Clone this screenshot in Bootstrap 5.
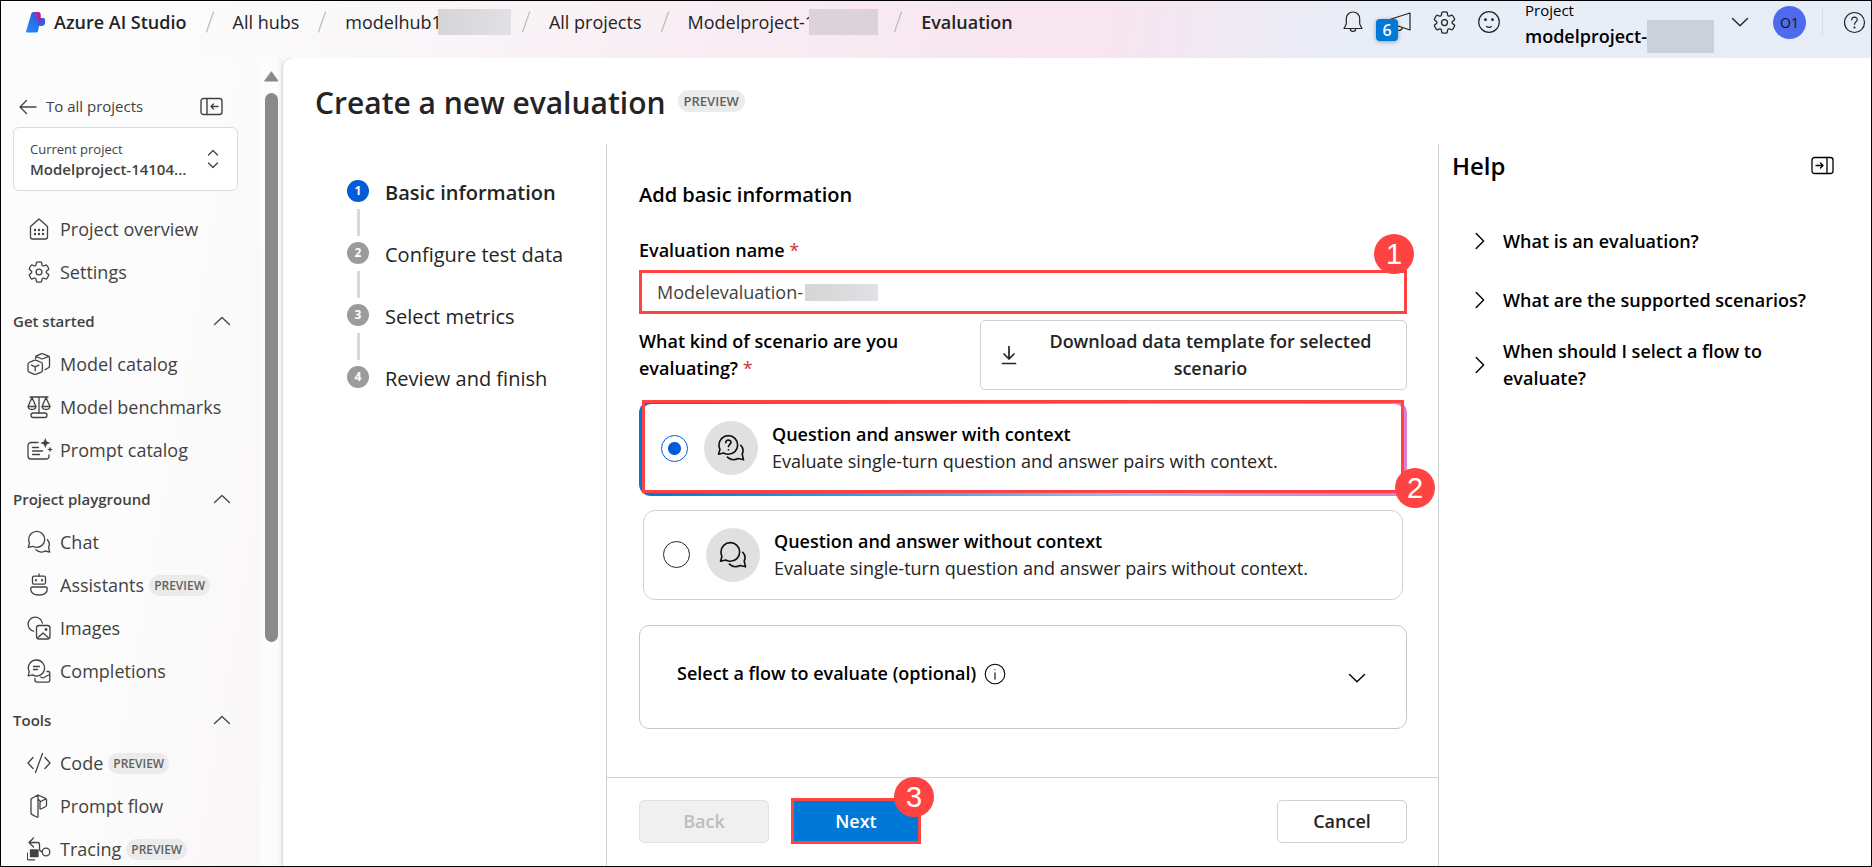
<!DOCTYPE html>
<html lang="en">
<head>
<meta charset="utf-8">
<meta name="viewport" content="width=device-width, initial-scale=1">
<title>Create a new evaluation - Azure AI Studio</title>
<link href="https://cdn.jsdelivr.net/npm/bootstrap@5.3.0/dist/css/bootstrap.min.css" rel="stylesheet">
<style>
:root{--ink:#242424;--ink-soft:#424242;--line:#d1d1d1;--blue:#0078d7;--radio:#015cda;--callout:#ff4343}
body{font-family:"Open Sans","Noto Sans",sans-serif;font-size:18px;line-height:27px;color:var(--ink);background:#fafafa}
svg{flex:none;fill:none;stroke:currentColor;stroke-linecap:round;stroke-linejoin:round}
button{color:inherit}
.semi{font-weight:600}
.frame{border:1px solid #000;background:linear-gradient(100deg,#fcfcfc 8%,#f9f5f8 22%,#f8e8f1 45%,#f7e5ef 55%,#e7eef8 68%,#e7edf7 100%)}

/* top bar */
.topbar{height:57px;padding-left:24px}
.crumbs{height:42px}
.crumbs a{color:var(--ink);text-decoration:none}
.crumbs .sep{width:8px;height:22px;margin:0 19px;stroke:#bdbdbd;stroke-width:1.2}
.crumbs .smudge{height:26px;position:relative}
.crumbs .smudge+.sep{margin-left:11px}
.smudge{background:linear-gradient(100deg,#d5d4d7,#dcdbde 60%,#e3e1e5);display:inline-block}
.smudge-hub{width:73px;margin-left:-4px}
.smudge-pink{width:69px;margin-left:-6px;background:#dcd2da}
.smudge-cool{width:67px;height:33px;background:#cad1da}
.tools{height:42px;padding-right:5px}
.iconbtn{border:0;background:none;padding:0;display:flex;position:relative}
.count{position:absolute;left:-12px;top:9px;width:22px;height:22px;line-height:22px;border-radius:4px;background:var(--blue);color:#fff;font-size:16px;font-weight:600;box-shadow:0 1px 4px rgba(0,0,0,.35)}
.avatar{width:33px;height:33px;border-radius:50%;background:#4f6bed;font-size:14px;line-height:33px;text-align:center;color:#111}
.vr-thin{width:1px;height:26px;background:#d5dbe4}
.proj{line-height:33px;width:206px;color:#000}
.proj small{font-size:15px;line-height:19px;display:block}

/* side navigation */
.side{width:259px;flex:none;padding:37px 22px 0 12px;color:var(--ink-soft);background:linear-gradient(100deg,#fcfcfc 50%,#f9f6f8)}
.side a,.side button{color:inherit;text-decoration:none}
.backrow{height:24px;font-size:15px;padding:0 15px 0 5px}
.picker{height:64px;margin-top:8px;padding:0 17px 0 16px;border:1px solid #dcdcdc;border-radius:6px;background:#fff;text-align:left;font-size:15px;line-height:20px}
.picker small{font-size:13px;display:block}
.navlist{margin:17px 0 0;padding:0;list-style:none}
.navitem{height:43px;padding-left:14px;gap:9px}
.navitem .pill{margin-left:-4px}
.navhead{height:43px;margin-top:6px;font-size:15px;border:0;background:none;padding:0 7px 0 0}
.pill{background:#ebebeb;color:#616161;border-radius:11px;font-size:12px;font-weight:600;line-height:21px;padding:0 5px}
.pill-lg{font-size:13px;line-height:22px;padding:0 6px}
.track{width:23px;flex:none;padding:13px 5px 0 4px;background:linear-gradient(90deg,#fcfcfc 75%,#ededed)}
.thumb{width:13px;height:549px;border-radius:7px;background:#8a8a8a;margin-top:11px}

/* main sheet */
.sheet{background:#fff;border-top-left-radius:10px;box-shadow:0 0 3px rgba(0,0,0,.2)}
.sheet-head{height:86px;padding:25px 0 0 32px;gap:12px}
.sheet-head h1{font-size:30px;line-height:40px;margin:0}
.sheet-head .pill{margin-top:7px}
.steps{width:323px;flex:none;padding:36px 0 0 64px;margin:0;list-style:none;font-size:20px;line-height:26px}
.steps li{height:62px;gap:16px;align-items:flex-start}
.stepmark{width:22px}
.stepmark b{display:block;width:22px;height:22px;border-radius:50%;background:#9b9b9b;color:#fff;font-size:12px;line-height:22px;text-align:center}
.stepmark .now{background:var(--radio)}
.stepmark i{width:3px;height:27px;background:#d8d8d8;margin-top:7px}
.formcol{border:1px solid var(--line);border-width:0 1px}
.formbody{padding:37px 31px 0 32px;color:#000}
.formbody h2{font-size:20px;line-height:28px;margin:0 0 28px}
.formbody label.caption{margin-bottom:6px}
.req{color:#d13438;font-weight:400}
.namebox{height:44px;border:3px solid var(--callout);border-radius:0;font-size:18px;padding:0 15px;color:var(--ink-soft);background:#fff}
.namebox:focus{border-color:var(--callout);box-shadow:none}
.namewrap .smudge{position:absolute;left:166px;top:14px;width:73px;height:17px}
.callout{position:absolute;width:40px;height:40px;border-radius:50%;background:var(--callout);color:#fff;font:29px/40px "Liberation Sans",sans-serif;text-align:center;z-index:2}
.c1{right:-7px;top:-36px}
.c2{right:-31px;bottom:-15px}
.c3{right:-16px;top:-24px}
.btn{--bs-btn-border-radius:5px;font-size:18px;line-height:27px}
.btn-line{border:1px solid var(--line);background:#fff;color:var(--ink)}
.kindrow{margin-top:6px}
.kind{max-width:300px}
.dl{width:427px;height:70px;padding:0 34px 0 20px;gap:32px}
.option{border-radius:12px;padding:0 19px;height:90px;border:1px solid var(--line);gap:16px;color:var(--ink)}
.option strong{display:block;font-weight:600;color:#000}
.option-on{height:95px;margin-top:11px;border:3px solid transparent;background:linear-gradient(#fff,#fff) padding-box,linear-gradient(90deg,#0078d4,#5ea9e6 45%,#a5b9e8 65%,#d982d3 90%) border-box}
.option-off{margin:14px 4px 0}
.redbox{position:absolute;inset:-4px 0 0 0;border:3px solid var(--callout);pointer-events:none}
.option .form-check-input{width:27px;height:27px;margin:0;border:1px solid #242424;flex:none;background-color:#fff}
.option .form-check-input:checked{border-color:var(--radio);background-image:radial-gradient(circle,var(--radio) 6px,transparent 7px)}
.disc{width:54px;height:54px;border-radius:50%;background:#e0e0e0;flex:none;color:#111}
.option>span:nth-child(3){margin-left:-2px}
.flowbox{height:104px;margin-top:25px;border:1px solid #c7c7c7;border-radius:10px;background:none;padding:0 40px 6px 37px}
.flowbox>svg{margin-top:9px}
.formfoot{height:89px;border-top:1px solid var(--line);padding:0 31px 2px 32px}
.formfoot .btn{width:130px;height:43px;padding:0}
.formfoot .btn-next{height:46px;margin-left:22px;border:3px solid var(--callout);border-radius:0;background:var(--blue);color:#fff}
.btn-off{border:1px solid #e0e0e0!important;background:#f0f0f0!important;color:#bdbdbd!important;opacity:1!important}
.help{width:432px;flex:none;padding:8px 37px 0 13px;color:#000}
.help h2{font-size:24px;line-height:28px;margin:0}
.helplist{padding:32px 40px 0 0}
.helpitem{min-height:59px;padding:8px 0 8px 23px;border:0;background:none;text-align:left;gap:18px}
</style>
</head>
<body>
<svg class="d-none" aria-hidden="true">
  <symbol id="gear" viewBox="0 0 20 20"><path d="M1.91 7.38A8.5 8.5 0 0 1 3.7 4.3a.5.5 0 0 1 .54-.13l1.92.68a1 1 0 0 0 1.32-.76l.36-2a.5.5 0 0 1 .4-.4 8.53 8.53 0 0 1 3.55 0c.2.04.35.2.38.4l.37 2a1 1 0 0 0 1.32.76l1.92-.68a.5.5 0 0 1 .54.13 8.5 8.5 0 0 1 1.78 3.08c.06.2 0 .4-.15.54l-1.56 1.32a1 1 0 0 0 0 1.52l1.56 1.32a.5.5 0 0 1 .15.54 8.5 8.5 0 0 1-1.78 3.08.5.5 0 0 1-.54.13l-1.92-.68a1 1 0 0 0-1.32.76l-.37 2a.5.5 0 0 1-.38.4 8.53 8.53 0 0 1-3.56 0 .5.5 0 0 1-.39-.4l-.36-2a1 1 0 0 0-1.32-.76l-1.92.68a.5.5 0 0 1-.54-.13 8.5 8.5 0 0 1-1.78-3.08.5.5 0 0 1 .15-.54l1.56-1.32a1 1 0 0 0 0-1.52L2.06 7.92a.5.5 0 0 1-.15-.54Z"/><circle cx="10" cy="10" r="2.4"/></symbol>
  <symbol id="up" viewBox="0 0 18 10"><path d="M1.5 8.5 9 1.5l7.5 7"/></symbol>
  <symbol id="down" viewBox="0 0 18 10"><path d="M1.5 1.5 9 8.8l7.5-7.3"/></symbol>
  <symbol id="right" viewBox="0 0 10 18"><path d="M1.2 1.5 8.6 9l-7.4 7.5"/></symbol>
  <symbol id="slash" viewBox="0 0 8 22"><path d="M7.5 1 .5 21"/></symbol>
  <symbol id="chat" viewBox="0 0 24 24"><path d="M9.7 1.4a8 8 0 0 1 8 8 8 8 0 0 1-8 8c-1.500 0-2.800-.4-4-1.100L1.300 17.300l1.200-4.100a8 8 0 0 1-.8-3.800 8 8 0 0 1 8-8Z"/><path d="M20.400 9.700a7 7 0 0 1 1.200 7.600l1.100 4.800-4.600-1.100a8 8 0 0 1-9.200-1.200"/></symbol>
  <symbol id="panel" viewBox="0 0 23 19"><rect x="1" y="1.500" width="21" height="16" rx="2.500"/><path d="M7 1.500v16M18 9.500h-7m2.500-2.500L11 9.500l2.500 2.500"/></symbol>
</svg>

<div class="frame vh-100 d-flex flex-column overflow-hidden">
  <header class="topbar d-flex justify-content-between">
    <nav aria-label="Breadcrumb">
      <div class="crumbs d-flex align-items-center text-nowrap">
        <svg width="21" height="22" viewBox="0 0 21 22" class="me-2" style="stroke:none">
          <defs><linearGradient id="lg" x1="0" y1="1" x2="1" y2="0"><stop offset="0" stop-color="#2a8cf5"/><stop offset="1" stop-color="#2352d8"/></linearGradient></defs>
          <path fill="url(#lg)" d="M8.500 1c-1 0-1.800.700-2.200 1.800L1 20.500q-.3 1 .8 1H10.500c1.500 0 2.500-.8 2.700-2.300L14 15h2.500c2 0 3.500-1.300 3.500-3V8.500q0-1.500-1.500-1.500h-3L12 1z"/>
          <path fill="#7b3fc4" d="M8 1h5v8h-1.500C10 7 9.500 3 8 1z"/><path fill="#c2188c" d="M12 1h1.500c1.500 0 2.200 1 2.200 2.500V13q-2.200-1-2.200-4z"/>
        </svg>
        <a href="#" class="semi">Azure AI Studio</a>
        <svg class="sep"><use href="#slash"/></svg><a href="#">All hubs</a>
        <svg class="sep"><use href="#slash"/></svg><a href="#">modelhub1</a><span class="smudge smudge-hub"></span>
        <svg class="sep"><use href="#slash"/></svg><a href="#">All projects</a>
        <svg class="sep"><use href="#slash"/></svg><a href="#">Modelproject-1</a><span class="smudge smudge-pink"></span>
        <svg class="sep ms-3"><use href="#slash"/></svg><a href="#" class="semi" aria-current="page">Evaluation</a>
      </div>
    </nav>
    <div class="tools d-flex align-items-center">
      <button class="iconbtn me-4" aria-label="Notifications"><svg width="22" height="24" viewBox="0 0 22 24" stroke-width="1.200"><path d="M11 2c-4 0-6.700 3-6.700 7v5L2 18.500h18L17.700 14V9c0-4-2.700-7-6.700-7ZM8.300 18.700c0 3.600 5.400 3.600 5.400 0"/></svg></button>
      <button class="iconbtn me-3" aria-label="Announcements"><svg width="24" height="24" viewBox="0 0 24 24" stroke-width="1.200"><path d="M22 3v17L2.500 13.500V9.300zM8 15.500v3.300c2.500 3 6 1.600 6.300-1.400"/></svg><span class="count">6</span></button>
      <button class="iconbtn me-3 ms-1" aria-label="Settings"><svg width="25" height="25" stroke-width="1"><use href="#gear"/></svg></button>
      <button class="iconbtn me-4 ms-1" aria-label="Feedback"><svg width="24" height="24" viewBox="0 0 24 24" stroke-width="1.200"><circle cx="12" cy="12" r="10.300"/><path d="M9.500 16.500c1.500 1 3.500 1 5 0"/><g fill="currentColor" stroke="none"><circle cx="8.500" cy="9.700" r="1.400"/><circle cx="15.500" cy="9.700" r="1.400"/></g></svg></button>
      <button class="iconbtn align-self-start">
        <span class="proj text-start"><small>Project</small><span class="semi d-flex">modelproject-<span class="smudge smudge-cool"></span></span></span>
      </button>
      <button class="iconbtn" aria-label="Choose project"><svg width="18" height="10" stroke-width="1.400"><use href="#down"/></svg></button>
      <span class="avatar ms-4">O1</span>
      <span class="vr-thin mx-3"></span>
      <button class="iconbtn ms-1" aria-label="Help"><svg width="23" height="23" viewBox="0 0 23 23" stroke-width="1.200"><circle cx="11.500" cy="11.500" r="10"/><path d="M8.700 9c0-4 5.800-3.500 5.600-.3-.1 2-2.800 2.200-2.800 4.600"/><circle cx="11.500" cy="16.500" r=".5"/></svg></button>
    </div>
  </header>

  <div class="d-flex flex-fill overflow-hidden">
    <aside class="side overflow-hidden">
      <div class="backrow d-flex align-items-center justify-content-between">
        <a href="#" class="d-flex align-items-center gap-2"><svg width="20" height="16" viewBox="0 0 20 16" stroke-width="1.300"><path d="M18 8H2m6.500-6.500L2 8l6.500 6.500"/></svg>To all projects</a>
        <button class="iconbtn" aria-label="Collapse navigation"><svg width="23" height="19" stroke-width="1.400"><use href="#panel"/></svg></button>
      </div>
      <button class="picker w-100 d-flex align-items-center justify-content-between">
        <span><small>Current project</small><span class="semi">Modelproject-14104...</span></span>
        <svg width="14" height="20" viewBox="0 0 14 20" stroke-width="1.300"><path d="m2.500 6 4.500-4.500L11.500 6M2.500 14l4.500 4.500 4.500-4.500"/></svg>
      </button>
      <ul class="navlist">
        <li><a href="#" class="navitem d-flex align-items-center"><svg width="24" height="24" viewBox="0 0 24 24" stroke-width="1.300"><path d="M3.500 9.500 12 2l8.500 7.500V20a2 2 0 0 1-2 2h-13a2 2 0 0 1-2-2z"/><g fill="currentColor" stroke="none"><circle cx="8" cy="13" r="1.200"/><circle cx="12" cy="13" r="1.200"/><circle cx="16" cy="13" r="1.200"/><circle cx="8" cy="17" r="1.200"/><circle cx="12" cy="17" r="1.200"/><circle cx="16" cy="17" r="1.200"/></g></svg>Project overview</a></li>
        <li><a href="#" class="navitem d-flex align-items-center"><svg width="24" height="24" stroke-width="1.100"><use href="#gear"/></svg>Settings</a></li>
        <li><button class="navhead semi w-100 d-flex align-items-center justify-content-between">Get started<svg width="18" height="10" stroke-width="1.300"><use href="#up"/></svg></button></li>
        <li><a href="#" class="navitem d-flex align-items-center"><svg width="24" height="24" viewBox="0 0 24 24" stroke-width="1.300"><path d="M8.500 6.500 9 4.200l5-2.400q1-.4 2 0l5.500 2.400q1 .5 1 1.500v8.500q0 1-1 1.600l-3.500 2M9 4.500l6 2.500 7-2.600"/><path d="m2 10.500 5-2.200q1.200-.4 2.400 0l5 2.200q1 .4 1 1.500v6.500q0 1.200-1 1.600l-5 2q-1.200.4-2.400 0l-5-2q-1-.4-1-1.600V12q0-1.100 1-1.500ZM4.500 13.200l3.700 1.600 3.700-1.600M8.200 14.800v4"/></svg>Model catalog</a></li>
        <li><a href="#" class="navitem d-flex align-items-center"><svg width="24" height="24" viewBox="0 0 24 24" stroke-width="1.300"><path d="M3 2h18M12 2v16M5 2.500l-4 9h8zM19 2.500l-4 9h8zM1 11.500c.5 4 7.500 4 8 0M15 11.500c.5 4 7.500 4 8 0"/><rect x="4" y="18" width="16" height="4.500" rx="2.200"/></svg>Model benchmarks</a></li>
        <li><a href="#" class="navitem d-flex align-items-center"><svg width="24" height="24" viewBox="0 0 24 24" stroke-width="1.300" overflow="visible"><path d="M11 4.500H4a3 3 0 0 0-3 3V18a3 3 0 0 0 3 3h15.500a2.500 2.500 0 0 0 2.500-2.500V17M5.500 9.500h6M5.500 13h10M5.500 16.500h7"/><path fill="currentColor" stroke="none" d="m18.300 0 1.400 3.600L23.300 5l-3.600 1.400-1.400 3.600-1.400-3.600L13.300 5l3.600-1.400zM23 8.500l.8 2.200 2.200.8-2.200.8L23 14.500l-.8-2.200-2.200-.8 2.200-.8z"/></svg>Prompt catalog</a></li>
        <li><button class="navhead semi w-100 d-flex align-items-center justify-content-between">Project playground<svg width="18" height="10" stroke-width="1.300"><use href="#up"/></svg></button></li>
        <li><a href="#" class="navitem d-flex align-items-center"><svg width="24" height="24" stroke-width="1.300"><use href="#chat"/></svg>Chat</a></li>
        <li><a href="#" class="navitem d-flex align-items-center"><svg width="24" height="24" viewBox="0 0 24 24" stroke-width="1.300"><path d="M12 .8v2.400M5.500 14h13q1.800 0 1.800 1.800c0 4-3 6.200-8.300 6.200s-8.300-2.200-8.300-6.200Q3.700 14 5.500 14Z"/><rect x="5.500" y="3.200" width="13" height="8" rx="1.500"/><path d="M9 7v.6M15 7v.6" stroke-width="2"/></svg>Assistants<span class="pill">PREVIEW</span></a></li>
        <li><a href="#" class="navitem d-flex align-items-center"><svg width="24" height="24" viewBox="0 0 24 24" stroke-width="1.300"><path d="M6.500 15.200A7.200 7.200 0 1 1 15.400 7"/><rect x="9.500" y="9.500" width="13.500" height="13.500" rx="2.500"/><path d="m11 21.500 5-4.500 5.200 4.500"/><circle cx="19" cy="13.500" r=".8"/></svg>Images</a></li>
        <li><a href="#" class="navitem d-flex align-items-center"><svg width="24" height="24" viewBox="0 0 24 24" stroke-width="1.300"><path d="M9.500 1a8 8 0 1 1-4 14.900l-4.300.9 1-4.300A8 8 0 0 1 9.500 1ZM6.500 7.500h6M6.500 10.500h4M20 12.500h1.200q1.600 0 1.600 1.600v7q0 2-2 2H10q-2 0-2-2v-1.600M13.500 18l2.500 1 6.500-3.500"/></svg>Completions</a></li>
        <li><button class="navhead semi w-100 d-flex align-items-center justify-content-between">Tools<svg width="18" height="10" stroke-width="1.300"><use href="#up"/></svg></button></li>
        <li><a href="#" class="navitem d-flex align-items-center"><svg width="24" height="24" viewBox="0 0 24 24" stroke-width="1.300"><path d="m6 6.500-5 5.500 5 5.500M18 6.500l5 5.500-5 5.500M15.500 2.500l-7 19"/></svg>Code<span class="pill">PREVIEW</span></a></li>
        <li><a href="#" class="navitem d-flex align-items-center"><svg width="24" height="24" viewBox="0 0 24 24" stroke-width="1.300"><path d="m11 1-6 3.200q-1 .5-1 1.600v13q0 1 .8 1.600L9.500 23q1.500.6 1.500-.8zM11 1l7.500 3.300q1 .5 1 1.600V11q0 1-.8 1.500L14 15q-1 .4-1-.6V9q0-1 .8-1.500l5.200-2.800M11 5l2.500 2.500"/></svg>Prompt flow</a></li>
        <li><a href="#" class="navitem d-flex align-items-center"><svg width="24" height="24" viewBox="0 0 24 24" stroke-width="1.300"><path d="M6.500 1 2 5.500 6.500 10M2 5.500h8.500q2 0 2 2V12q0 2.500 2.500 2.500M.3 16v5.500q0 1.300 1.300 1.300h6"/><circle cx="19" cy="15" r="3.800"/><path fill="currentColor" d="M3.500 13h7.500v6.500H3.500z"/></svg>Tracing<span class="pill">PREVIEW</span></a></li>
      </ul>
    </aside>
    <div class="track d-flex flex-column align-items-center" aria-hidden="true">
      <svg width="15" height="11" viewBox="0 0 15 11" style="stroke:#8a8a8a;fill:#8a8a8a"><path d="M7.500 1 14 10H1z"/></svg>
      <div class="thumb"></div>
    </div>

    <main class="sheet flex-fill d-flex flex-column">
      <div class="sheet-head d-flex align-items-start">
        <h1 class="semi">Create a new evaluation</h1>
        <span class="pill pill-lg">PREVIEW</span>
      </div>
      <div class="d-flex flex-fill">
        <ol class="steps">
          <li class="d-flex"><span class="stepmark d-flex flex-column align-items-center"><b class="now">1</b><i></i></span><span class="semi">Basic information</span></li>
          <li class="d-flex"><span class="stepmark d-flex flex-column align-items-center"><b>2</b><i></i></span>Configure test data</li>
          <li class="d-flex"><span class="stepmark d-flex flex-column align-items-center"><b>3</b><i></i></span>Select metrics</li>
          <li class="d-flex"><span class="stepmark d-flex flex-column align-items-center"><b>4</b></span>Review and finish</li>
        </ol>

        <form class="formcol flex-fill d-flex flex-column" onsubmit="return false">
          <div class="formbody">
            <h2 class="semi">Add basic information</h2>
            <label for="ename" class="caption semi d-block">Evaluation name <span class="req">*</span></label>
            <div class="namewrap position-relative">
              <input id="ename" type="text" class="namebox form-control" value="Modelevaluation-">
              <span class="smudge"></span>
              <span class="callout c1">1</span>
            </div>
            <div class="kindrow d-flex align-items-center justify-content-between">
              <span id="kind" class="semi kind">What kind of scenario are you evaluating? <span class="req">*</span></span>
              <button type="button" class="btn btn-line dl semi d-flex align-items-center flex-shrink-0"><svg width="16" height="20" viewBox="0 0 16 20" stroke-width="1.700"><path d="M8 1.500v12M3 9l5 5 5-5M1.500 18.500h13"/></svg><span class="flex-fill">Download data template for selected scenario</span></button>
            </div>
            <div role="radiogroup" aria-labelledby="kind">
              <label class="option option-on d-flex align-items-center position-relative">
                <input class="form-check-input" type="radio" name="scenario" checked>
                <span class="disc d-flex align-items-center justify-content-center"><svg width="28" height="28" viewBox="0 0 24 24" stroke-width="1.400"><use href="#chat"/><path d="M7.500 7.400c0-3 4.600-2.700 4.500-.2-.1 1.600-2.200 1.700-2.200 3.600M9.800 13.600v.1"/></svg></span>
                <span><strong>Question and answer with context</strong>Evaluate single-turn question and answer pairs with context.</span>
                <span class="redbox"></span><span class="callout c2">2</span>
              </label>
              <label class="option option-off d-flex align-items-center">
                <input class="form-check-input" type="radio" name="scenario">
                <span class="disc d-flex align-items-center justify-content-center"><svg width="28" height="28" stroke-width="1.400"><use href="#chat"/></svg></span>
                <span><strong>Question and answer without context</strong>Evaluate single-turn question and answer pairs without context.</span>
              </label>
            </div>
            <button type="button" class="flowbox w-100 d-flex align-items-center justify-content-between">
              <span class="semi d-flex align-items-center gap-2">Select a flow to evaluate (optional)<svg width="22" height="22" viewBox="0 0 22 22" stroke-width="1.100"><circle cx="11" cy="11" r="9.800"/><path d="M11 9.700v6.500M11 6.500v.1"/></svg></span>
              <svg width="18" height="10" stroke-width="1.400"><use href="#down"/></svg>
            </button>
          </div>
          <div class="formfoot mt-auto d-flex align-items-center">
            <button type="button" class="btn btn-off semi" disabled>Back</button>
            <button type="submit" class="btn btn-next semi position-relative">Next<span class="callout c3">3</span></button>
            <button type="button" class="btn btn-line semi ms-auto">Cancel</button>
          </div>
        </form>

        <aside class="help">
          <div class="d-flex align-items-center justify-content-between">
            <h2 class="semi">Help</h2>
            <button class="iconbtn" aria-label="Close help"><svg width="23" height="19" viewBox="0 0 23 19" stroke-width="1.300"><rect x="1" y="1.500" width="21" height="16" rx="2.500"/><path d="M16 1.500v16M5 9.500h7m-2.500-2.500L12 9.500 9.500 12"/></svg></button>
          </div>
          <div class="helplist">
            <button class="helpitem semi w-100 d-flex align-items-center text-nowrap"><svg width="10" height="18" stroke-width="1.400"><use href="#right"/></svg>What is an evaluation?</button>
            <button class="helpitem semi w-100 d-flex align-items-center text-nowrap"><svg width="10" height="18" stroke-width="1.400"><use href="#right"/></svg>What are the supported scenarios?</button>
            <button class="helpitem semi w-100 d-flex align-items-center"><svg width="10" height="18" stroke-width="1.400"><use href="#right"/></svg>When should I select a flow to evaluate?</button>
          </div>
        </aside>
      </div>
    </main>
  </div>
</div>
<script src="https://cdn.jsdelivr.net/npm/bootstrap@5.3.0/dist/js/bootstrap.bundle.min.js"></script>
</body>
</html>
